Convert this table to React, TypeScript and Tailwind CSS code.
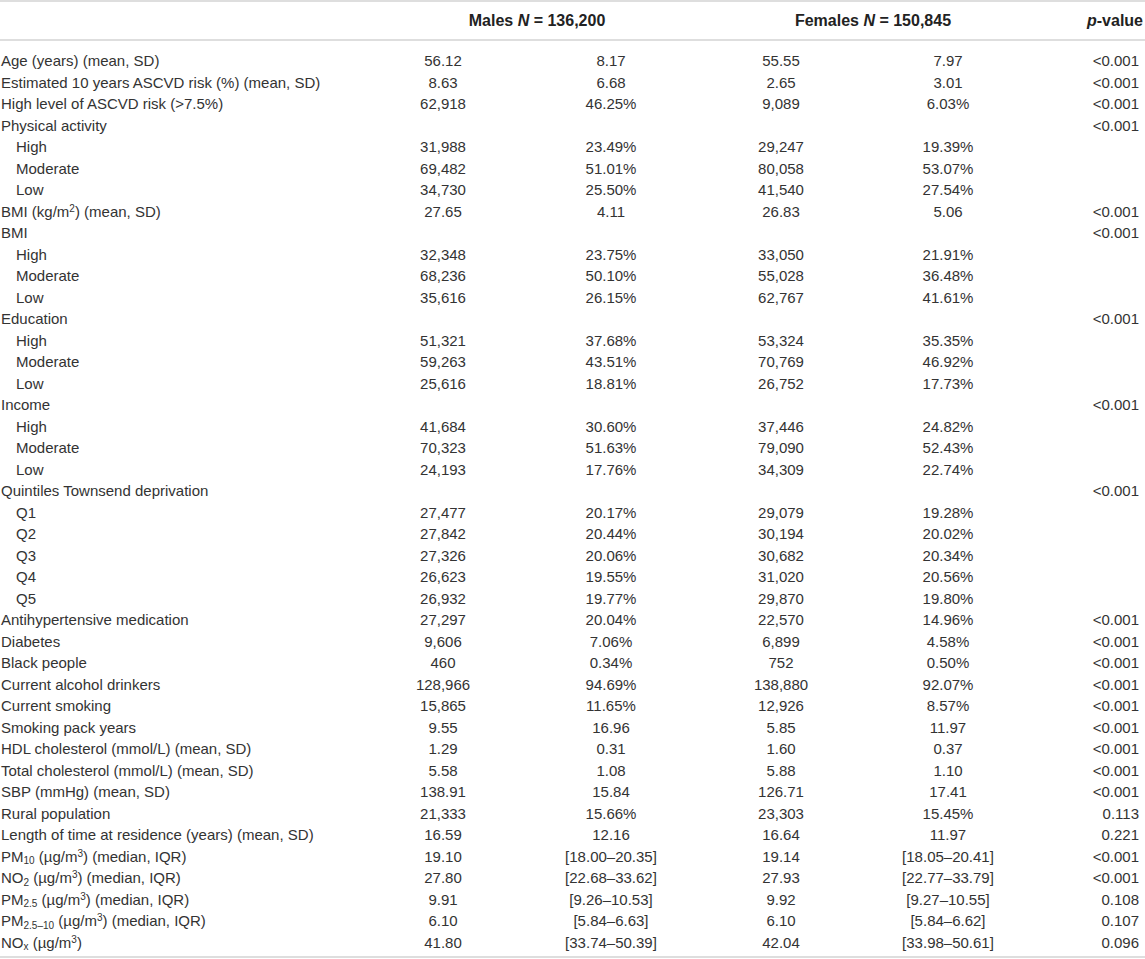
import type { ReactNode } from "react";

type Row = {
  label: ReactNode;
  sub?: boolean;
  m1?: string;
  m2?: string;
  f1?: string;
  f2?: string;
  p?: string;
};

const ug = (
  <>
    (µg/m<sup className="text-[10px]">3</sup>)
  </>
);

const rows: Row[] = [
  { label: "Age (years) (mean, SD)", m1: "56.12", m2: "8.17", f1: "55.55", f2: "7.97", p: "<0.001" },
  { label: "Estimated 10 years ASCVD risk (%) (mean, SD)", m1: "8.63", m2: "6.68", f1: "2.65", f2: "3.01", p: "<0.001" },
  { label: "High level of ASCVD risk (>7.5%)", m1: "62,918", m2: "46.25%", f1: "9,089", f2: "6.03%", p: "<0.001" },
  { label: "Physical activity", p: "<0.001" },
  { label: "High", sub: true, m1: "31,988", m2: "23.49%", f1: "29,247", f2: "19.39%" },
  { label: "Moderate", sub: true, m1: "69,482", m2: "51.01%", f1: "80,058", f2: "53.07%" },
  { label: "Low", sub: true, m1: "34,730", m2: "25.50%", f1: "41,540", f2: "27.54%" },
  {
    label: (
      <>
        BMI (kg/m<sup className="text-[10px]">2</sup>) (mean, SD)
      </>
    ),
    m1: "27.65",
    m2: "4.11",
    f1: "26.83",
    f2: "5.06",
    p: "<0.001",
  },
  { label: "BMI", p: "<0.001" },
  { label: "High", sub: true, m1: "32,348", m2: "23.75%", f1: "33,050", f2: "21.91%" },
  { label: "Moderate", sub: true, m1: "68,236", m2: "50.10%", f1: "55,028", f2: "36.48%" },
  { label: "Low", sub: true, m1: "35,616", m2: "26.15%", f1: "62,767", f2: "41.61%" },
  { label: "Education", p: "<0.001" },
  { label: "High", sub: true, m1: "51,321", m2: "37.68%", f1: "53,324", f2: "35.35%" },
  { label: "Moderate", sub: true, m1: "59,263", m2: "43.51%", f1: "70,769", f2: "46.92%" },
  { label: "Low", sub: true, m1: "25,616", m2: "18.81%", f1: "26,752", f2: "17.73%" },
  { label: "Income", p: "<0.001" },
  { label: "High", sub: true, m1: "41,684", m2: "30.60%", f1: "37,446", f2: "24.82%" },
  { label: "Moderate", sub: true, m1: "70,323", m2: "51.63%", f1: "79,090", f2: "52.43%" },
  { label: "Low", sub: true, m1: "24,193", m2: "17.76%", f1: "34,309", f2: "22.74%" },
  { label: "Quintiles Townsend deprivation", p: "<0.001" },
  { label: "Q1", sub: true, m1: "27,477", m2: "20.17%", f1: "29,079", f2: "19.28%" },
  { label: "Q2", sub: true, m1: "27,842", m2: "20.44%", f1: "30,194", f2: "20.02%" },
  { label: "Q3", sub: true, m1: "27,326", m2: "20.06%", f1: "30,682", f2: "20.34%" },
  { label: "Q4", sub: true, m1: "26,623", m2: "19.55%", f1: "31,020", f2: "20.56%" },
  { label: "Q5", sub: true, m1: "26,932", m2: "19.77%", f1: "29,870", f2: "19.80%" },
  { label: "Antihypertensive medication", m1: "27,297", m2: "20.04%", f1: "22,570", f2: "14.96%", p: "<0.001" },
  { label: "Diabetes", m1: "9,606", m2: "7.06%", f1: "6,899", f2: "4.58%", p: "<0.001" },
  { label: "Black people", m1: "460", m2: "0.34%", f1: "752", f2: "0.50%", p: "<0.001" },
  { label: "Current alcohol drinkers", m1: "128,966", m2: "94.69%", f1: "138,880", f2: "92.07%", p: "<0.001" },
  { label: "Current smoking", m1: "15,865", m2: "11.65%", f1: "12,926", f2: "8.57%", p: "<0.001" },
  { label: "Smoking pack years", m1: "9.55", m2: "16.96", f1: "5.85", f2: "11.97", p: "<0.001" },
  { label: "HDL cholesterol (mmol/L) (mean, SD)", m1: "1.29", m2: "0.31", f1: "1.60", f2: "0.37", p: "<0.001" },
  { label: "Total cholesterol (mmol/L) (mean, SD)", m1: "5.58", m2: "1.08", f1: "5.88", f2: "1.10", p: "<0.001" },
  { label: "SBP (mmHg) (mean, SD)", m1: "138.91", m2: "15.84", f1: "126.71", f2: "17.41", p: "<0.001" },
  { label: "Rural population", m1: "21,333", m2: "15.66%", f1: "23,303", f2: "15.45%", p: "0.113" },
  { label: "Length of time at residence (years) (mean, SD)", m1: "16.59", m2: "12.16", f1: "16.64", f2: "11.97", p: "0.221" },
  {
    label: (
      <>
        PM<sub className="text-[10px]">10</sub> {ug} (median, IQR)
      </>
    ),
    m1: "19.10",
    m2: "[18.00–20.35]",
    f1: "19.14",
    f2: "[18.05–20.41]",
    p: "<0.001",
  },
  {
    label: (
      <>
        NO<sub className="text-[10px]">2</sub> {ug} (median, IQR)
      </>
    ),
    m1: "27.80",
    m2: "[22.68–33.62]",
    f1: "27.93",
    f2: "[22.77–33.79]",
    p: "<0.001",
  },
  {
    label: (
      <>
        PM<sub className="text-[10px]">2.5</sub> {ug} (median, IQR)
      </>
    ),
    m1: "9.91",
    m2: "[9.26–10.53]",
    f1: "9.92",
    f2: "[9.27–10.55]",
    p: "0.108",
  },
  {
    label: (
      <>
        PM<sub className="text-[10px]">2.5–10</sub> {ug} (median, IQR)
      </>
    ),
    m1: "6.10",
    m2: "[5.84–6.63]",
    f1: "6.10",
    f2: "[5.84–6.62]",
    p: "0.107",
  },
  {
    label: (
      <>
        NO<sub className="text-[10px]">x</sub> {ug}
      </>
    ),
    m1: "41.80",
    m2: "[33.74–50.39]",
    f1: "42.04",
    f2: "[33.98–50.61]",
    p: "0.096",
  },
];

const cols = "grid grid-cols-[360px_166px_170px_170px_164px_1fr]";

export default function App() {
  return (
    <div className="min-h-[959px] w-[1145px] bg-white font-['Liberation_Sans',Arial,sans-serif] text-[15px] text-[#333]">
      <div className="h-[2px] bg-[#dedede]" />

      {/* header */}
      <div className={`${cols} h-[37px] items-center text-[16px] font-bold text-[#222]`}>
        <div />
        <div className="col-span-2 pl-[18px] text-center">
          Males <i>N</i> = 136,200
        </div>
        <div className="col-span-2 pl-[20px] text-center">
          Females <i>N</i> = 150,845
        </div>
        <div className="pr-[2px] text-right">
          <i>p</i>-value
        </div>
      </div>
      <div className="h-[2px] bg-[#dedede]" />

      {/* body */}
      <div className="pt-[9px]">
        {rows.map((r, i) => (
          <div key={i} className={`${cols} h-[21.5px] items-center leading-none`}>
            <div className={`whitespace-nowrap ${r.sub ? "pl-[16px]" : "pl-[1px]"}`}>
              {r.label}
            </div>
            <div className="text-center">{r.m1}</div>
            <div className="text-center">{r.m2}</div>
            <div className="text-center">{r.f1}</div>
            <div className="text-center">{r.f2}</div>
            <div className="pr-[6px] text-right">{r.p}</div>
          </div>
        ))}
      </div>
      <div className="mt-[3px] h-[2px] bg-[#dedede]" />
    </div>
  );
}
